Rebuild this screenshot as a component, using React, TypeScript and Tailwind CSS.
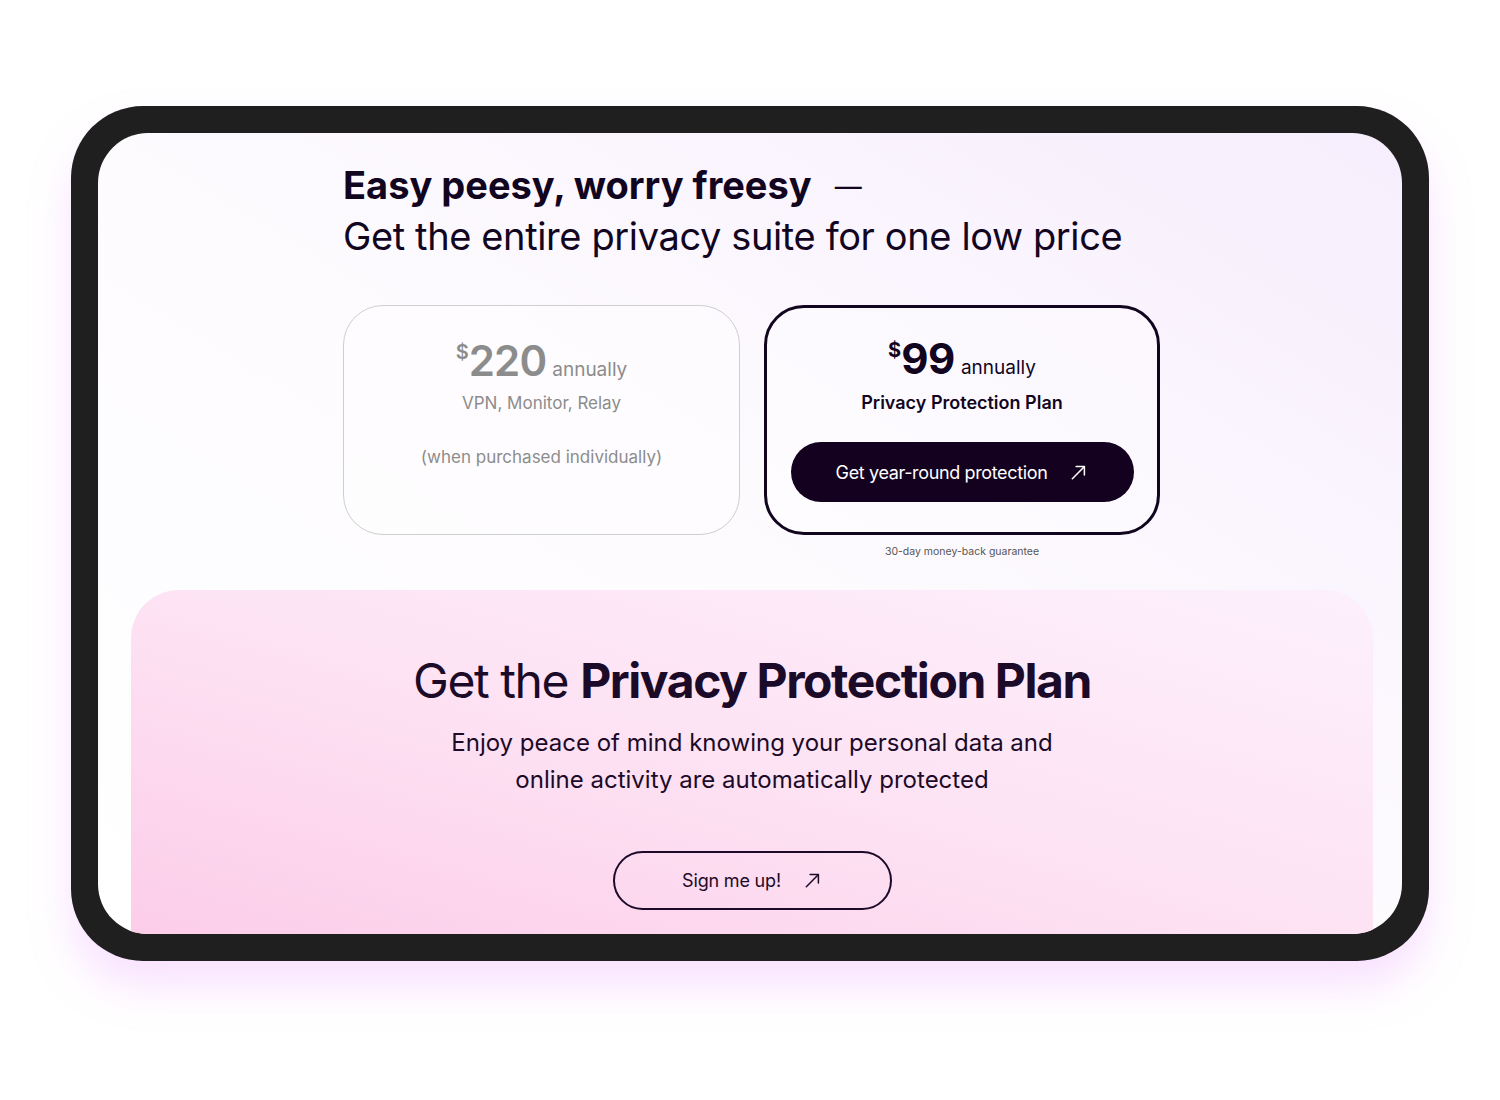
import React from "react";

function Arrow({ className = "" }: { className?: string }) {
  return (
    <svg viewBox="0 0 20 20" className={className} fill="none" stroke="currentColor" strokeWidth={1.6} strokeLinecap="round" strokeLinejoin="round">
      <path d="M3.5 16.5 16 4" />
      <path d="M7.5 3.8h8.7v8.7" />
    </svg>
  );
}

export default function App() {
  return (
    <div className="min-h-screen bg-white font-['Inter',sans-serif] text-[#1c0a29] pt-[106px] pb-[139px] flex justify-center">
      <div className="w-[1358px] h-[855px] rounded-[72px] bg-[#1f1f1f] p-[27px] shadow-[0_26px_40px_rgba(238,175,255,0.36)]">
        <div className="h-full rounded-[50px] overflow-hidden bg-gradient-to-bl from-[#f7eefd] via-[#fdfbfe] to-white flex flex-col">
          {/* header */}
          <div className="w-[816px] pt-[27px] ml-[245px]">
            <h2 className="h-[51px] text-[38px] leading-[51px] font-bold tracking-[0em] text-[#12051f]">
              Easy peesy, worry freesy{" "}
              <span className="font-normal text-[27px] leading-none ml-[14px] align-[3px]">—</span>
            </h2>
            <p className="text-[38px] leading-[51px] font-normal tracking-[-0.01em] text-[#12051f]">
              Get the entire privacy suite for one low price
            </p>
          </div>

          {/* cards */}
          <div className="ml-[245px] mt-[43px] flex gap-[24px]">
            <div className="w-[397px] h-[230px] rounded-[40px] border border-[#cfcfcf] bg-white/40 flex flex-col items-center pt-[30px] text-[#8c8c8c]">
              <div className="flex items-baseline leading-none h-[50px] pt-[4px]">
                <span className="text-[20px] font-semibold self-start mt-[2px]">$</span>
                <span className="text-[42px] font-semibold tracking-[-0.02em]">220</span>
                <span className="text-[19px] ml-[6px]">annually</span>
              </div>
              <div className="mt-[5px] text-[17px] leading-[24px]">VPN, Monitor, Relay</div>
              <div className="mt-[30px] text-[17px] leading-[24px]">(when purchased individually)</div>
            </div>

            <div className="flex flex-col items-center">
              <div className="w-[396px] h-[230px] rounded-[40px] border-[3px] border-[#12051f] bg-white/40 flex flex-col items-center pt-[26px] text-[#12051f]">
                <div className="flex items-baseline leading-none h-[50px] pt-[4px]">
                  <span className="text-[20px] font-bold self-start mt-[2px]">$</span>
                  <span className="text-[42px] font-bold tracking-[-0.01em]">99</span>
                  <span className="text-[19px] ml-[6px]">annually</span>
                </div>
                <div className="mt-[7px] text-[18px] leading-[24px] font-semibold">Privacy Protection Plan</div>
                <button className="mt-[27px] w-[343px] h-[60px] rounded-full bg-[#14011f] text-white flex items-center justify-center gap-[22px] text-[18px] tracking-[-0.02em]">
                  <span>Get year-round protection</span>
                  <Arrow className="w-[19px] h-[19px]" />
                </button>
              </div>
              <div className="mt-[10px] text-[10.5px] leading-[14px] text-[#555]">30-day money-back guarantee</div>
            </div>
          </div>

          {/* pink section */}
          <div className="mt-[31px] ml-[33px] w-[1242px] flex-1 rounded-t-[48px] bg-gradient-to-tr from-[#fccde9] via-[#fde3f4] to-[#fdf0fd] flex flex-col items-center pt-[62px]">
            <h3 className="text-[48px] leading-[58px] tracking-[-0.03em] text-[#1c0a29]">
              Get the <span className="font-bold">Privacy Protection Plan</span>
            </h3>
            <p className="mt-[14px] text-[24px] leading-[37px] text-center text-[#1c0a29] tracking-[0em]">
              Enjoy peace of mind knowing your personal data and
              <br />
              online activity are automatically protected
            </p>
            <button className="mt-[53px] w-[279px] h-[59px] rounded-full border-2 border-[#1c0a29] flex items-center justify-center gap-[22px] text-[18px] tracking-[-0.01em] text-[#1c0a29]">
              <span>Sign me up!</span>
              <Arrow className="w-[19px] h-[19px]" />
            </button>
          </div>
        </div>
      </div>
    </div>
  );
}
